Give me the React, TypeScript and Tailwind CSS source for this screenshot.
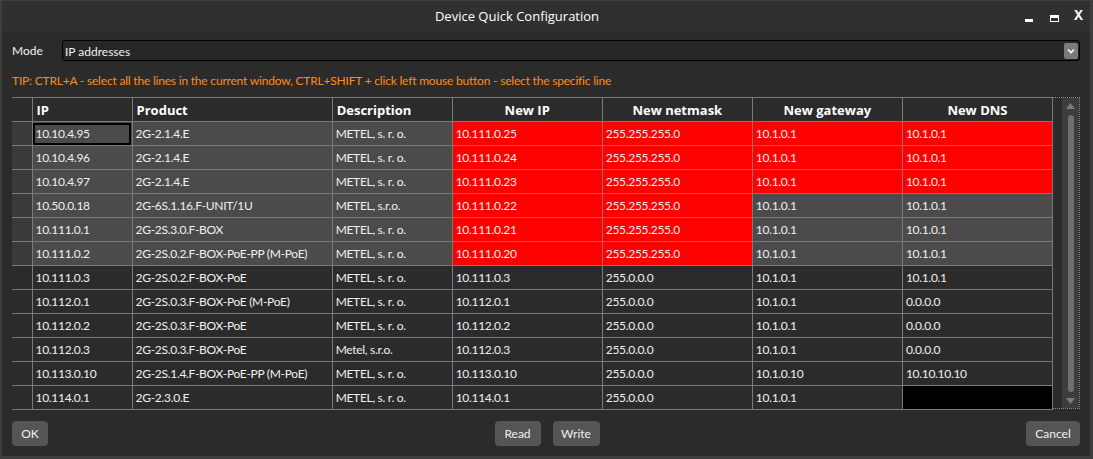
import React from "react";

type Row = {
  ip: string;
  product: string;
  desc: string;
  newIp: string;
  mask: string;
  gw: string;
  dns: string;
  red: number; // how many of the new columns are marked red
  light: boolean;
  blackDns?: boolean;
};

const rows: Row[] = [
  { ip: "10.10.4.95", product: "2G-2.1.4.E", desc: "METEL, s. r. o.", newIp: "10.111.0.25", mask: "255.255.255.0", gw: "10.1.0.1", dns: "10.1.0.1", red: 4, light: true },
  { ip: "10.10.4.96", product: "2G-2.1.4.E", desc: "METEL, s. r. o.", newIp: "10.111.0.24", mask: "255.255.255.0", gw: "10.1.0.1", dns: "10.1.0.1", red: 4, light: true },
  { ip: "10.10.4.97", product: "2G-2.1.4.E", desc: "METEL, s. r. o.", newIp: "10.111.0.23", mask: "255.255.255.0", gw: "10.1.0.1", dns: "10.1.0.1", red: 4, light: true },
  { ip: "10.50.0.18", product: "2G-6S.1.16.F-UNIT/1U", desc: "METEL, s.r.o.", newIp: "10.111.0.22", mask: "255.255.255.0", gw: "10.1.0.1", dns: "10.1.0.1", red: 2, light: true },
  { ip: "10.111.0.1", product: "2G-2S.3.0.F-BOX", desc: "METEL, s. r. o.", newIp: "10.111.0.21", mask: "255.255.255.0", gw: "10.1.0.1", dns: "10.1.0.1", red: 2, light: true },
  { ip: "10.111.0.2", product: "2G-2S.0.2.F-BOX-PoE-PP (M-PoE)", desc: "METEL, s. r. o.", newIp: "10.111.0.20", mask: "255.255.255.0", gw: "10.1.0.1", dns: "10.1.0.1", red: 2, light: true },
  { ip: "10.111.0.3", product: "2G-2S.0.2.F-BOX-PoE", desc: "METEL, s. r. o.", newIp: "10.111.0.3", mask: "255.0.0.0", gw: "10.1.0.1", dns: "10.1.0.1", red: 0, light: false },
  { ip: "10.112.0.1", product: "2G-2S.0.3.F-BOX-PoE (M-PoE)", desc: "METEL, s. r. o.", newIp: "10.112.0.1", mask: "255.0.0.0", gw: "10.1.0.1", dns: "0.0.0.0", red: 0, light: false },
  { ip: "10.112.0.2", product: "2G-2S.0.3.F-BOX-PoE", desc: "METEL, s. r. o.", newIp: "10.112.0.2", mask: "255.0.0.0", gw: "10.1.0.1", dns: "0.0.0.0", red: 0, light: false },
  { ip: "10.112.0.3", product: "2G-2S.0.3.F-BOX-PoE", desc: "Metel, s.r.o.", newIp: "10.112.0.3", mask: "255.0.0.0", gw: "10.1.0.1", dns: "0.0.0.0", red: 0, light: false },
  { ip: "10.113.0.10", product: "2G-2S.1.4.F-BOX-PoE-PP (M-PoE)", desc: "METEL, s. r. o.", newIp: "10.113.0.10", mask: "255.0.0.0", gw: "10.1.0.10", dns: "10.10.10.10", red: 0, light: false },
  { ip: "10.114.0.1", product: "2G-2.3.0.E", desc: "METEL, s. r. o.", newIp: "10.114.0.1", mask: "255.0.0.0", gw: "10.1.0.1", dns: "", red: 0, light: false, blackDns: true },
];

const Btn = ({ children, className = "" }: { children: React.ReactNode; className?: string }) => (
  <button className={`h-[25px] rounded-[4px] bg-[#555555] text-[12px] text-[#f0f0f0] ${className}`}>
    {children}
  </button>
);

const App = () => {
  const cell = "h-[24px] border border-[#7a7a7a] px-[3px] text-left whitespace-nowrap tracking-[-0.3px]";
  const headCell = "h-[24px] border border-[#7a7a7a] px-[4px] pt-[2px] text-[13px] font-bold text-white";
  const headFont = { fontFamily: "'Open Sans', 'Noto Sans', sans-serif" };

  return (
    <div
      className="w-[1093px] h-[459px] flex flex-col bg-[#2b2b2b] border-l-[2px] border-r-[3px] border-t-[1px] border-b-[3px] border-[#3e3e3e] text-[12px] text-[#f0f0f0] overflow-hidden"
      style={{ fontFamily: "Lato, 'Open Sans', sans-serif" }}
    >
      {/* title bar */}
      <div className="relative h-[30px] flex items-center justify-center bg-[#303030]">
        <span className="text-[13px] text-white pl-[-10px] pr-[58px] pt-[2px]" style={headFont}>
          Device Quick Configuration
        </span>
        <div className="absolute right-[7px] top-[11px] flex items-end h-[10px]">
          <div className="w-[8px] h-[3px] bg-white" />
          <div className="ml-[17px] w-[9px] h-[7px] border-[1px] border-white border-t-[3px]" />
          <span
            className="ml-[15px] text-[15px] font-bold leading-[10px] text-white"
            style={{ fontFamily: "'Liberation Mono', monospace" }}
          >
            X
          </span>
        </div>
      </div>

      <div className="flex-1 flex flex-col px-[10px]">
        {/* mode */}
        <div className="mt-[9px] flex items-center h-[21px]">
          <span className="w-[50px] text-[12px]">Mode</span>
          <div className="flex-1 h-[21px] flex items-center justify-between rounded-[3px] border border-black bg-[#262626] pl-[2px] pr-[1px]">
            <span className="pt-[2px]">IP addresses</span>
            <div className="w-[14px] h-[16px] rounded-[2px] bg-[#7a7a7a] flex items-center justify-center">
              <svg width="8" height="6" viewBox="0 0 8 6">
                <path d="M1 1.5 L4 4.5 L7 1.5" stroke="white" strokeWidth="1.6" fill="none" />
              </svg>
            </div>
          </div>
        </div>

        {/* tip */}
        <div className="mt-[11px] h-[18px] leading-[18px] text-[12px] text-[#ff8c1a] tracking-[-0.2px]">
          TIP: CTRL+A - select all the lines in the current window, CTRL+SHIFT + click left mouse button - select the specific line
        </div>

        {/* grid */}
        <div className="mt-[7px] h-[312px] flex border border-dotted border-[#8a8a8a] bg-[#2b2b2b]">
          <table className="border-collapse table-fixed w-[1041px] -mt-px -ml-px self-start">
            <colgroup>
              <col className="w-[20px]" />
              <col className="w-[100px]" />
              <col className="w-[200px]" />
              <col className="w-[120px]" />
              <col className="w-[150px]" />
              <col className="w-[150px]" />
              <col className="w-[150px]" />
              <col className="w-[150px]" />
            </colgroup>
            <thead style={headFont}>
              <tr className="bg-[#2b2b2b]">
                <th className="h-[24px] border border-[#7a7a7a] border-l-0" />
                <th className={`${headCell} text-left`}>IP</th>
                <th className={`${headCell} text-left`}>Product</th>
                <th className={`${headCell} text-left`}>Description</th>
                <th className={`${headCell} text-center`}>New IP</th>
                <th className={`${headCell} text-center`}>New netmask</th>
                <th className={`${headCell} text-center`}>New gateway</th>
                <th className={`${headCell} text-center`}>New DNS</th>
              </tr>
            </thead>
            <tbody>
              {rows.map((r, i) => {
                const base = r.light ? "bg-[#4b4b4b]" : "bg-[#2b2b2b]";
                const red = (k: number) => (k < r.red ? "bg-[#ff0000]" : base);
                return (
                  <tr key={i}>
                    <td className={`h-[24px] border border-[#7a7a7a] border-l-0 ${r.light ? "bg-[#3a3a3a]" : "bg-[#2b2b2b]"}`} />
                    <td className={`${cell} ${base} ${i === 0 ? "outline-[2px] outline-black -outline-offset-[3px]" : ""}`}>{r.ip}</td>
                    <td className={`${cell} ${base}`}>{r.product}</td>
                    <td className={`${cell} ${base}`}>{r.desc}</td>
                    <td className={`${cell} ${red(0)}`}>{r.newIp}</td>
                    <td className={`${cell} ${red(1)}`}>{r.mask}</td>
                    <td className={`${cell} ${red(2)}`}>{r.gw}</td>
                    <td className={`${cell} ${r.blackDns ? "bg-black" : red(3)}`}>{r.dns}</td>
                  </tr>
                );
              })}
            </tbody>
          </table>
          <div className="flex-1" />
          {/* scrollbar */}
          <div className="w-[17px] bg-[#3d3d3d] flex flex-col items-center pt-[5px] pb-[4px]">
            <svg width="9" height="6" viewBox="0 0 9 6">
              <path d="M0 6 L4.5 0 L9 6 Z" fill="#7c7c7c" />
            </svg>
            <div className="mt-[6px] w-[6px] flex-1 rounded-[3px] bg-[#6f6f6f]" />
            <svg className="mt-[6px]" width="9" height="6" viewBox="0 0 9 6">
              <path d="M0 0 L9 0 L4.5 6 Z" fill="#7c7c7c" />
            </svg>
          </div>
        </div>

        {/* buttons */}
        <div className="mt-[12px] flex items-center">
          <Btn className="w-[36px]">OK</Btn>
          <div className="flex-1 flex justify-center gap-[12px] pl-[20px]">
            <Btn className="w-[46px]">Read</Btn>
            <Btn className="w-[47px]">Write</Btn>
          </div>
          <Btn className="w-[54px]">Cancel</Btn>
        </div>
      </div>
    </div>
  );
};

export default App;
